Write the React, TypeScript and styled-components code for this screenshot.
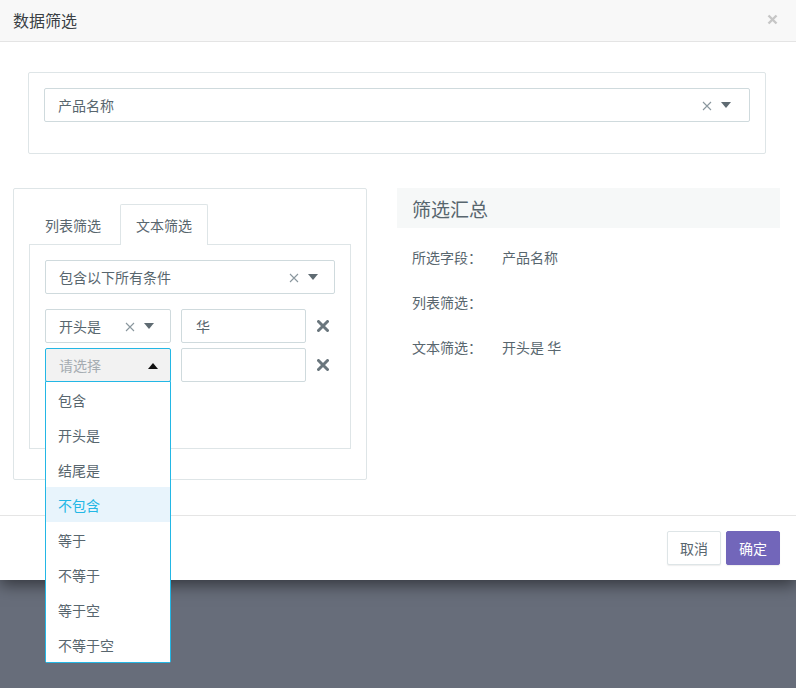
import React from 'react'
import styled, { createGlobalStyle } from 'styled-components'

const GlobalStyle = createGlobalStyle`
  html, body {
    margin: 0;
    padding: 0;
  }
  body {
    background: #676d7a;
    height: 688px;
    overflow: hidden;
    font-family: "Noto Sans CJK SC", "Noto Sans", sans-serif;
    color: #58666e;
    font-size: 14px;
  }
  * { box-sizing: border-box; }
`

const ops = ['包含', '开头是', '结尾是', '不包含', '等于', '不等于', '等于空', '不等于空']

function ClearIcon() {
  return <svg width="10" height="10" viewBox="0 0 10 10">
    <path d="M1 1 L9 9 M9 1 L1 9" stroke="#8a979e" strokeWidth="1.1" fill="none" />
  </svg>
}

function CaretIcon(props: { up?: boolean, dark?: boolean }) {
  return <svg width="10" height="6" viewBox="0 0 10 6">
    <path d={props.up ? 'M0 6 L5 0 L10 6 Z' : 'M0 0 L10 0 L5 6 Z'} fill={props.dark ? '#111' : '#5f6b72'} />
  </svg>
}

function RemoveIcon() {
  return <svg width="12" height="12" viewBox="0 0 12 12">
    <path d="M1.5 1.5 L10.5 10.5 M10.5 1.5 L1.5 10.5" stroke="#6a767d" strokeWidth="3" strokeLinecap="round" fill="none" />
  </svg>
}

export default function App() {
  return <>
    <GlobalStyle />
    <Modal>
      <Header>
        <HeaderTitle>数据筛选</HeaderTitle>
        <Close>
          <svg width="11" height="11" viewBox="0 0 11 11">
            <path d="M1.5 1.5 L9.5 9.5 M9.5 1.5 L1.5 9.5" stroke="#c6c6c6" strokeWidth="2.4" fill="none" />
          </svg>
        </Close>
      </Header>

      <Body>
        <FieldCard>
          <Select $width="100%" $right={18}>
            <Value>产品名称</Value>
            <Icons><ClearIcon /><CaretIcon /></Icons>
          </Select>
        </FieldCard>

        <Columns>
          <FilterPanel>
            <Tabs>
              <Tab>列表筛选</Tab>
              <Tab $active>文本筛选</Tab>
            </Tabs>
            <TabBody>
              <Select $width="290px" $right={16}>
                <Value>包含以下所有条件</Value>
                <Icons><ClearIcon /><CaretIcon /></Icons>
              </Select>

              <Rule style={{ marginTop: 15 }}>
                <Select $width="126px" $right={16}>
                  <Value>开头是</Value>
                  <Icons><ClearIcon /><CaretIcon /></Icons>
                </Select>
                <Input>华</Input>
                <Remove><RemoveIcon /></Remove>
              </Rule>

              <Rule style={{ marginTop: 5 }}>
                <SelectWrap>
                  <Select $width="126px" $right={12} $open>
                    <Value $placeholder>请选择</Value>
                    <Icons><CaretIcon up dark /></Icons>
                  </Select>
                  <Menu>
                    {ops.map((o, i) => <MenuItem key={o} $hover={i === 3}>{o}</MenuItem>)}
                  </Menu>
                </SelectWrap>
                <Input />
                <Remove><RemoveIcon /></Remove>
              </Rule>
            </TabBody>
          </FilterPanel>

          <Summary>
            <SummaryTitle>筛选汇总</SummaryTitle>
            <SummaryList>
              <SummaryRow><Label>所选字段：</Label><span>产品名称</span></SummaryRow>
              <SummaryRow><Label>列表筛选：</Label></SummaryRow>
              <SummaryRow><Label>文本筛选：</Label><span>开头是 华</span></SummaryRow>
            </SummaryList>
          </Summary>
        </Columns>
      </Body>

      <Footer>
        <Button>取消</Button>
        <Button $primary>确定</Button>
      </Footer>
    </Modal>
  </>
}

const Modal = styled.div`
  width: 796px;
  background: #fff;
  box-shadow: 0 5px 15px rgba(0, 0, 0, 0.5);
  position: relative;
`;
const Header = styled.div`
  height: 42px;
  display: flex;
  align-items: center;
  justify-content: space-between;
  padding: 0 18px 0 13px;
  background: #f8f8f8;
  border-bottom: 1px solid #e4e4e4;
`;
const HeaderTitle = styled.div`
  font-size: 16px;
  color: #3a3f44;
  margin-top: -2px;
`;
const Close = styled.div`
  display: flex;
  margin-top: -2px;
`;
const Body = styled.div`
  padding: 30px 16px 35px 13px;
`;
const FieldCard = styled.div`
  margin: 0 14px 34px 15px;
  border: 1px solid #dee5e7;
  border-radius: 2px;
  padding: 15px 15px 31px;
`;
const Select = styled.div<{ $width: string, $right: number, $open?: boolean }>`
  width: ${p => p.$width};
  height: 34px;
  display: flex;
  align-items: center;
  justify-content: space-between;
  padding: 0 ${p => p.$right}px 0 13px;
  border: 1px solid ${p => p.$open ? '#23b7e5' : '#cfdadd'};
  background: ${p => p.$open ? '#f2f2f2' : '#fff'};
  border-radius: 2px;
`;
const Value = styled.span<{ $placeholder?: boolean }>`
  font-size: 14px;
  color: ${p => p.$placeholder ? '#a5acb1' : '#58666e'};
`;
const Icons = styled.span`
  display: flex;
  align-items: center;
  gap: 9px;
  svg:first-child { margin-top: 2px; }
`;
const Columns = styled.div`
  display: flex;
  gap: 30px;
`;
const FilterPanel = styled.div`
  width: 355px;
  border: 1px solid #dee5e7;
  border-radius: 2px;
  padding: 15px 15px 30px;
`;
const Tabs = styled.div`
  display: flex;
  gap: 3px;
`;
const Tab = styled.div<{ $active?: boolean }>`
  height: 41px;
  padding: 0 15px;
  display: flex;
  align-items: center;
  font-size: 14px;
  color: #58666e;
  border: 1px solid ${p => p.$active ? '#dee5e7' : 'transparent'};
  border-bottom: none;
  background: ${p => p.$active ? '#fff' : 'transparent'};
  border-radius: 2px 2px 0 0;
  margin-bottom: -1px;
  position: relative;
  z-index: 1;
`;
const TabBody = styled.div`
  border: 1px solid #dee5e7;
  padding: 15px 15px 66px;
`;
const Rule = styled.div`
  display: flex;
  align-items: center;
  gap: 10px;
`;
const SelectWrap = styled.div`
  position: relative;
`;
const Menu = styled.div`
  position: absolute;
  left: 0;
  top: 33px;
  width: 126px;
  background: #fff;
  border: 1px solid #23b7e5;
  border-radius: 0 0 2px 2px;
  z-index: 10;
`;
const MenuItem = styled.div<{ $hover?: boolean }>`
  height: 35px;
  display: flex;
  align-items: center;
  padding-left: 12px;
  font-size: 14px;
  color: ${p => p.$hover ? '#23b7e5' : '#58666e'};
  background: ${p => p.$hover ? '#e8f4fc' : '#fff'};
`;
const Input = styled.div`
  width: 125px;
  height: 34px;
  border: 1px solid #cfdadd;
  border-radius: 2px;
  padding: 0 14px;
  display: flex;
  align-items: center;
  font-size: 14px;
  color: #58666e;
`;
const Remove = styled.div`
  display: flex;
  padding-left: 1px;
`;
const Summary = styled.div`
  width: 384px;
`;
const SummaryTitle = styled.div`
  height: 40px;
  background: #f6f8f8;
  padding-left: 15px;
  display: flex;
  align-items: center;
  font-size: 19px;
  color: #58666e;
`;
const SummaryList = styled.div`
  padding-top: 6px;
`;
const SummaryRow = styled.div`
  height: 45px;
  display: flex;
  align-items: center;
  padding-left: 15px;
  font-size: 14px;
  color: #58666e;
`;
const Label = styled.span`
  width: 90px;
`;
const Footer = styled.div`
  border-top: 1px solid #e5e5e5;
  padding: 15px 16px 15px 0;
  display: flex;
  justify-content: flex-end;
  gap: 5px;
`;
const Button = styled.div<{ $primary?: boolean }>`
  width: 54px;
  height: 34px;
  display: flex;
  align-items: center;
  justify-content: center;
  font-size: 14px;
  border-radius: 2px;
  color: ${p => p.$primary ? '#fff' : '#58666e'};
  background: ${p => p.$primary ? '#7266ba' : '#fff'};
  border: 1px solid ${p => p.$primary ? '#7266ba' : '#dee5e7'};
  box-shadow: 0 1px 1px rgba(90, 90, 90, 0.1);
`;
